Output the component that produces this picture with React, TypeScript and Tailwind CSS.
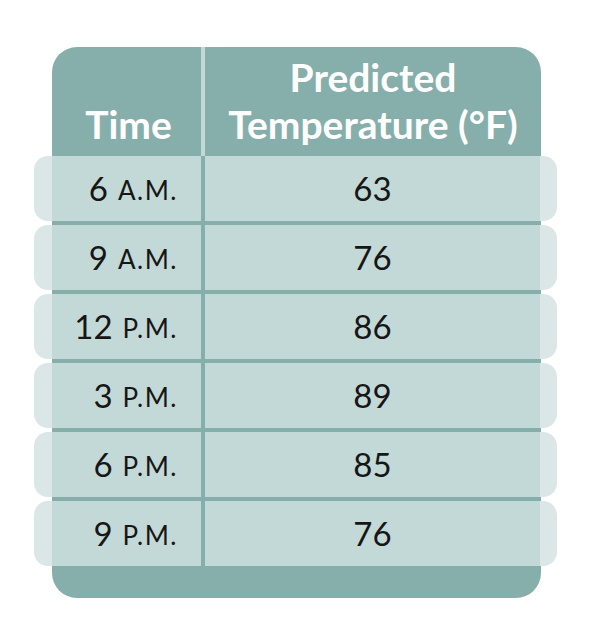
const rows = [
  { hour: "6", period: "A.M.", temp: "63" },
  { hour: "9", period: "A.M.", temp: "76" },
  { hour: "12", period: "P.M.", temp: "86" },
  { hour: "3", period: "P.M.", temp: "89" },
  { hour: "6", period: "P.M.", temp: "85" },
  { hour: "9", period: "P.M.", temp: "76" },
];

const font = { fontFamily: "Lato, 'Open Sans', sans-serif" };

export default function App() {
  return (
    <div className="w-[593px] h-[641px] bg-white px-[34px] pt-[47px]" style={font}>
      <div className="mx-[18px] h-[109px] rounded-t-[25px] bg-[#86afab] flex text-white font-bold text-[39px] leading-[47px]">
        <div className="w-[149px] flex items-end justify-center pb-[8px] pl-[4px]">Time</div>
        <div className="w-[4px] bg-[#c3d9d7]" />
        <div className="flex-1 flex flex-col items-center justify-center text-center pb-[2px]">
          <span>Predicted</span>
          <span>Temperature (°F)</span>
        </div>
      </div>

      {rows.map((r, i) => (
        <div key={i}>
          {i > 0 && <div className="mx-[18px] h-[4px] bg-[#86afab]" />}
          <div className="flex h-[65px]">
            <div className="w-[18px] bg-[#dbe7e7] rounded-l-[14px]" />
            <div className="w-[488px] flex bg-[#c3d9d7] text-[#161616]">
              <div className="w-[149px] flex items-center justify-end pr-[23px]">
                <span className="text-[33px]">{r.hour}</span>
                <span className="text-[26px] tracking-[1.5px] ml-[10px] mt-[3px]">{r.period}</span>
              </div>
              <div className="w-[4px] bg-[#86afab]" />
              <div className="flex-1 flex items-center justify-center text-[33px]">{r.temp}</div>
            </div>
            <div className="w-[17px] bg-[#dbe7e7] rounded-r-[14px]" />
          </div>
        </div>
      ))}

      <div className="mx-[18px] h-[32px] rounded-b-[25px] bg-[#86afab]" />
    </div>
  );
}
